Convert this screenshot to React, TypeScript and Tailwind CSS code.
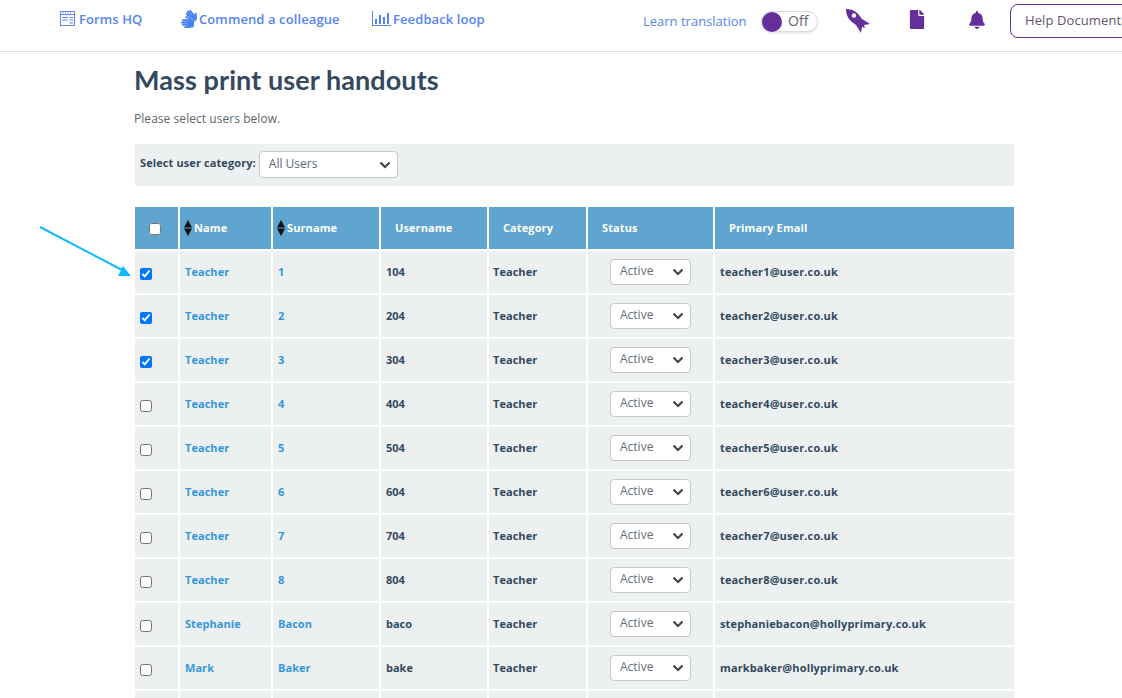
import React from "react";
import { FaSignLanguage, FaFile, FaBell } from "react-icons/fa";

const rows: [string, string, string, string, boolean][] = [
  ["Teacher", "1", "104", "teacher1@user.co.uk", true],
  ["Teacher", "2", "204", "teacher2@user.co.uk", true],
  ["Teacher", "3", "304", "teacher3@user.co.uk", true],
  ["Teacher", "4", "404", "teacher4@user.co.uk", false],
  ["Teacher", "5", "504", "teacher5@user.co.uk", false],
  ["Teacher", "6", "604", "teacher6@user.co.uk", false],
  ["Teacher", "7", "704", "teacher7@user.co.uk", false],
  ["Teacher", "8", "804", "teacher8@user.co.uk", false],
  ["Stephanie", "Bacon", "baco", "stephaniebacon@hollyprimary.co.uk", false],
  ["Mark", "Baker", "bake", "markbaker@hollyprimary.co.uk", false],
];

const Chevron = () => (
  <svg width="12" height="8" viewBox="0 0 12 8" fill="none" stroke="#444" strokeWidth="2.2">
    <path d="M1.5 1.5 6 6l4.5-4.5" />
  </svg>
);

const Sort = () => (
  <svg width="8" height="16" viewBox="0 0 8 16" fill="#111" className="shrink-0">
    <path d="M4 0 8 7.4H0Z M4 16 8 8.6H0Z" />
  </svg>
);

const FormsIcon = () => (
  <svg width="15" height="15" viewBox="0 0 15 15" fill="none" stroke="#5f86f2" className="shrink-0">
    <rect x="0.5" y="0.5" width="14" height="14" />
    <path d="M0.5 3.5H14.5" />
    <path d="M2.5 2H3.5M5 2H6M7.5 2H8.5M10 2H11" strokeWidth="1" />
    <path d="M2 6.5H8M9.5 6.5H13M2 9H8M9.5 9H13M9.5 12H13" />
  </svg>
);

const ChartIcon = () => (
  <svg width="19" height="15" viewBox="0 0 19 15" fill="#5585f2" className="shrink-0">
    <path d="M0 0H1V14H19V15H0Z" />
    <rect x="3" y="8" width="2" height="5" />
    <rect x="7" y="4" width="2" height="9" />
    <rect x="11" y="6" width="2" height="7" />
    <rect x="15" y="2" width="2" height="11" />
  </svg>
);

const RocketIcon = () => (
  <svg width="24" height="24" viewBox="0 0 24 24" fill="#652f9b" className="shrink-0">
    <path
      fillRule="evenodd"
      d="M0 0C5 0 10 2 13 6L16 10 24 15 18 16 19 19 16 18 15 24 10 16 6 13C2 10 0 5 0 0ZM8 4.3A2.2 2.2 0 1 0 8 8.7 2.2 2.2 0 1 0 8 4.3Z"
    />
  </svg>
);

const head = "bg-[#5fa5cf] text-white font-bold text-[11px] tracking-[0.1px] flex items-center";
const cell = "bg-[#ecf0f1] flex items-center text-[11px] font-bold";

export default function App() {
  return (
    <div className="relative h-[698px] w-[1122px] overflow-hidden bg-white font-['Open_Sans',sans-serif] text-[#34495e]">
      <header className="flex h-[52px] w-[1122px] items-start border-b border-[#dddddd] text-[13px] font-semibold tracking-[0.1px] text-[#5585f2]">
        <div className="ml-[60px] flex h-[40px] w-[120px] shrink-0 items-center gap-[4px]">
          <div className="mb-[4px]"><FormsIcon /></div>
          <span>Forms HQ</span>
        </div>
        <div className="flex h-[40px] w-[192px] shrink-0 items-center gap-[1px]">
          <FaSignLanguage className="mb-[2px] shrink-0 text-[18px] text-[#4583f2]" />
          <span>Commend a colleague</span>
        </div>
        <div className="flex h-[40px] w-[271px] shrink-0 items-center gap-[2px]">
          <div className="mb-[4px]"><ChartIcon /></div>
          <span>Feedback loop</span>
        </div>
        <span className="mt-[12px] w-[118px] shrink-0 text-[13px] font-normal tracking-normal text-[#5585f2]">Learn translation</span>
        <div className="mt-[11px] flex h-[21px] w-[57px] shrink-0 items-center rounded-full border border-[#dcdcdc] bg-white shadow-sm">
          <span className="h-[20px] w-[20px] shrink-0 rounded-full bg-[#652f9b]" />
          <span className="mb-[2px] ml-[6px] text-[14px] font-normal text-[#5a6570]">Off</span>
        </div>
        <div className="ml-[28px] mt-[9px] shrink-0"><RocketIcon /></div>
        <FaFile className="ml-[39px] mt-[10px] h-[19px] w-[16px] shrink-0 text-[#652f9b]" />
        <FaBell className="ml-[44px] mt-[11px] h-[18px] w-[16px] shrink-0 text-[#652f9b]" />
        <div className="ml-[25px] mt-[4px] flex h-[34px] w-[140px] shrink-0 items-center whitespace-nowrap rounded-[8px] border border-[#652f9b] pl-[14px] text-[13px] font-normal text-[#5f5470]">
          Help Documentation
        </div>
      </header>

      <main className="ml-[135px] w-[879px]">
        <h1 className="-ml-[1px] mt-[10px] h-[36px] font-['Lato',sans-serif] text-[27px] leading-[36px] font-bold tracking-[0.08px] text-[#34495e]">
          Mass print user handouts
        </h1>
        <p className="-ml-[1px] mt-[12px] h-[18px] text-[12px] leading-[18px] tracking-[0.05px] text-[#5d6670]">Please select users below.</p>
        <div className="mt-[16px] flex h-[42px] items-start gap-[3px] bg-[#ecf0f1] pl-[5px] pt-[7px]">
          <span className="mt-[3px] text-[11px] leading-[18px] font-bold tracking-[0.1px]">Select user category:</span>
          <div className="flex h-[27px] w-[139px] items-center justify-between rounded-[4px] border border-[#c9c9c9] bg-white pl-[9px] pr-[6px] text-[12px] text-[#5d6670]">
            <span className="mb-[1px]">All Users</span>
            <Chevron />
          </div>
        </div>

        <div className="mt-[21px] grid grid-cols-[43px_91px_106px_106px_97px_125px_299px] gap-[2px]">
          <div className={`${head} h-[42px] pl-[14px] pt-[2px]`}>
            <input type="checkbox" readOnly className="h-[12px] w-[12px]" />
          </div>
          <div className={`${head} gap-[2px] pl-[4px]`}>
            <Sort />
            <span>Name</span>
          </div>
          <div className={`${head} gap-[2px] pl-[4px]`}>
            <Sort />
            <span>Surname</span>
          </div>
          <div className={`${head} pl-[14px]`}>Username</div>
          <div className={`${head} pl-[14px]`}>Category</div>
          <div className={`${head} pl-[14px]`}>Status</div>
          <div className={`${head} pl-[14px]`}>Primary Email</div>

          {rows.map((r) => (
            <React.Fragment key={r[3]}>
              <div className={`${cell} h-[42px] pl-[5px] pt-[3px]`}>
                <input type="checkbox" readOnly defaultChecked={r[4]} className="h-[12px] w-[12px]" />
              </div>
              <div className={`${cell} pl-[5px] text-[#3498db] tracking-[0.05px]`}>{r[0]}</div>
              <div className={`${cell} pl-[5px] text-[#3498db] tracking-[0.05px]`}>{r[1]}</div>
              <div className={`${cell} pl-[5px]`}>{r[2]}</div>
              <div className={`${cell} pl-[4px] tracking-[0.05px]`}>Teacher</div>
              <div className={`${cell} pl-[22px] font-normal`}>
                <div className="flex h-[26px] w-[81px] items-center justify-between rounded-[4px] border border-[#c9c9c9] bg-white pl-[9px] pr-[6px] text-[12px] text-[#666e78]">
                  <span className="mb-[2px]">Active</span>
                  <Chevron />
                </div>
              </div>
              <div className={`${cell} pl-[5px] tracking-[0.13px]`}>{r[3]}</div>
            </React.Fragment>
          ))}
          <div className={`${cell} h-[42px]`} />
          <div className={cell} />
          <div className={cell} />
          <div className={cell} />
          <div className={cell} />
          <div className={cell} />
          <div className={cell} />
        </div>
      </main>

      <svg className="absolute left-[38px] top-[224px]" width="96" height="54" viewBox="0 0 96 54" fill="none">
        <path d="M2 3 86 47" stroke="#0cbcff" strokeWidth="2" />
        <path d="M80 52H93L85 42Z" fill="#0cbcff" />
      </svg>
    </div>
  );
}
